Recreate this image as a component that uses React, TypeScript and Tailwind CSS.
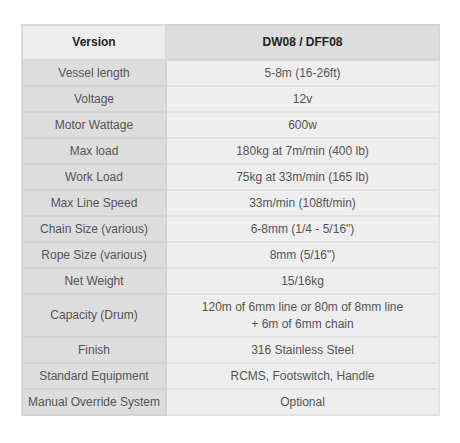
const rows: [string, React.ReactNode][] = [
  ["Vessel length", "5-8m (16-26ft)"],
  ["Voltage", "12v"],
  ["Motor Wattage", "600w"],
  ["Max load", "180kg at 7m/min (400 lb)"],
  ["Work Load", "75kg at 33m/min (165 lb)"],
  ["Max Line Speed", "33m/min (108ft/min)"],
  ["Chain Size (various)", "6-8mm (1/4 - 5/16\")"],
  ["Rope Size (various)", "8mm (5/16\")"],
  ["Net Weight", "15/16kg"],
  [
    "Capacity (Drum)",
    <>
      120m of 6mm line or 80m of 8mm line
      <br />+ 6m of 6mm chain
    </>,
  ],
  ["Finish", "316 Stainless Steel"],
  ["Standard Equipment", "RCMS, Footswitch, Handle"],
  ["Manual Override System", "Optional"],
];

export default function App() {
  return (
    <div className="h-[443px] w-[460px] bg-white pl-[21px] pt-[24px] font-['Liberation_Sans',Arial,sans-serif]">
      <table className="w-[419px] table-fixed border-collapse text-[12px] leading-[17px] text-[#555]">
        <colgroup>
          <col className="w-[144px]" />
          <col />
        </colgroup>
        <thead>
          <tr className="h-[35px]">
            <th className="border-2 border-[#dadada] bg-[#eeeeee] font-bold text-[#222]">Version</th>
            <th className="border-2 border-[#d4d4d4] bg-[#dddddd] font-bold text-[#222]">DW08 / DFF08</th>
          </tr>
        </thead>
        <tbody>
          {rows.map(([label, value], i) => (
            <tr key={i} className={i === 9 ? "h-[43px]" : "h-[26px]"}>
              <td className="border-2 border-[#d4d4d4] bg-[#dddddd] px-1 text-center">{label}</td>
              <td className="border-2 border-[#e2e2e2] bg-[#eeeeee] px-1 text-center">{value}</td>
            </tr>
          ))}
        </tbody>
      </table>
    </div>
  );
}
